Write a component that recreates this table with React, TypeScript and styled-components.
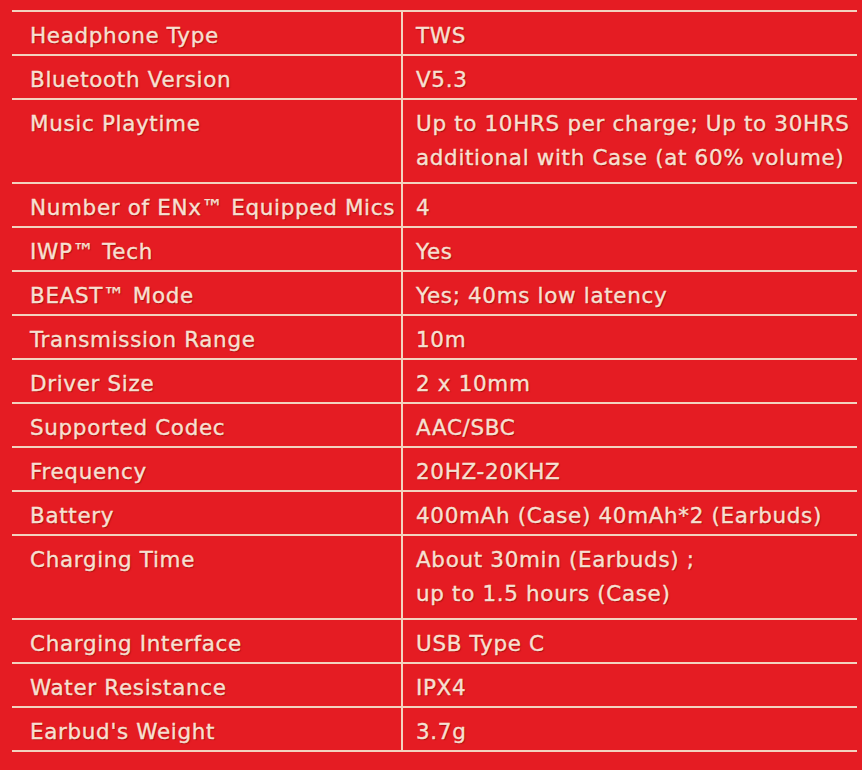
import styled, { createGlobalStyle } from 'styled-components';

const GlobalStyle = createGlobalStyle`
  html, body {
    margin: 0;
    padding: 0;
    background: #e51c23;
  }
`;

const Page = styled.div`
  min-height: 100vh;
  box-sizing: border-box;
  padding: 10px 5px 0 12px;
  background: #e51c23;
  font-family: 'DejaVu Sans', 'Noto Sans', sans-serif;
`;

const SpecTable = styled.table`
  width: 100%;
  border-collapse: collapse;
  border-top: 2px solid #f3d2bf;
`;

const Row = styled.tr<{ $tall?: boolean }>`
  height: ${({ $tall }) => ($tall ? '84px' : '43.5px')};
  border-bottom: 2px solid #f3d2bf;
`;

const Cell = styled.td`
  padding: 7px 0 1px 13px;
  vertical-align: top;
  color: #f7e0d2;
  font-size: 21.5px;
  line-height: 34px;
  letter-spacing: 0.65px;
  -webkit-text-stroke: 0.35px #f7e0d2;
  text-shadow: 1px 1px 1px rgba(110, 0, 0, 0.55);
`;

const LabelCell = styled(Cell)`
  width: 371px;
  padding-left: 18px;
  border-right: 2px solid #f3d2bf;
  white-space: nowrap;
`;

const specs: { label: React.ReactNode; value: React.ReactNode; tall?: boolean }[] = [
  { label: 'Headphone Type', value: 'TWS' },
  { label: 'Bluetooth Version', value: 'V5.3' },
  {
    label: 'Music Playtime',
    value: (
      <>
        Up to 10HRS per charge; Up to 30HRS
        <br />
        additional with Case (at 60% volume)
      </>
    ),
    tall: true,
  },
  { label: 'Number of ENx™ Equipped Mics', value: '4' },
  { label: 'IWP™ Tech', value: 'Yes' },
  { label: 'BEAST™ Mode', value: 'Yes; 40ms low latency' },
  { label: 'Transmission Range', value: '10m' },
  { label: 'Driver Size', value: '2 x 10mm' },
  { label: 'Supported Codec', value: 'AAC/SBC' },
  { label: 'Frequency', value: '20HZ-20KHZ' },
  { label: 'Battery', value: '400mAh (Case) 40mAh*2 (Earbuds)' },
  {
    label: 'Charging Time',
    value: (
      <>
        About 30min (Earbuds) ;
        <br />
        up to 1.5 hours (Case)
      </>
    ),
    tall: true,
  },
  { label: 'Charging Interface', value: 'USB Type C' },
  { label: 'Water Resistance', value: 'IPX4' },
  { label: "Earbud's Weight", value: '3.7g' },
];

export default function App() {
  return (
    <>
      <GlobalStyle />
      <Page>
        <SpecTable>
          <tbody>
            {specs.map((spec, i) => (
              <Row key={i} $tall={spec.tall}>
                <LabelCell>{spec.label}</LabelCell>
                <Cell>{spec.value}</Cell>
              </Row>
            ))}
          </tbody>
        </SpecTable>
      </Page>
    </>
  );
}
